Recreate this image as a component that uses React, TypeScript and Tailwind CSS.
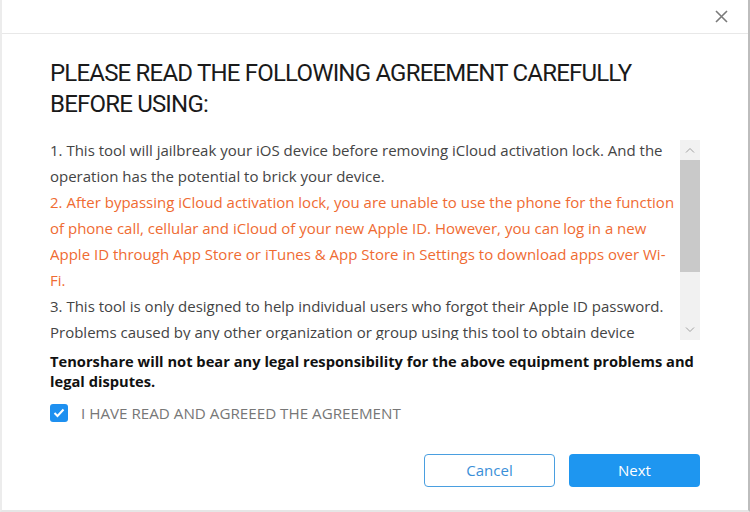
import React from "react";

const body = '"Microsoft YaHei", "Open Sans", "Noto Sans", sans-serif';

function Chevron({ up }: { up?: boolean }) {
  return (
    <svg width="10" height="6" viewBox="0 0 10 6" fill="none" stroke="#a0a0a0" strokeWidth="1">
      {up ? <path d="M1 5.5 L5 1.5 L9 5.5" /> : <path d="M1 0.5 L5 4.5 L9 0.5" />}
    </svg>
  );
}

export default function App() {
  return (
    <div className="w-[750px] h-[512px] bg-white border-l-2 border-r-2 border-b-2 border-l-[#ececec] border-r-[#bdbdbd] border-b-[#e6e6e6] flex flex-col overflow-hidden">
      {/* Header */}
      <div className="h-[34px] shrink-0 border-b border-[#e8e8e8] flex items-center justify-end pr-[20px]">
        <svg width="13" height="13" viewBox="0 0 13 13" stroke="#7a7a7a" strokeWidth="1.6">
          <path d="M1 1 L12 12 M12 1 L1 12" />
        </svg>
      </div>

      <div className="flex-1 flex flex-col pl-[48px] pr-[48px]">
        <h1
          className="mt-[24px] text-[24px] leading-[31px] tracking-[-0.8px] text-[#1a1a1a] font-normal"
          style={{ fontFamily: 'Roboto, "Liberation Sans", sans-serif' }}
        >
          PLEASE READ THE FOLLOWING AGREEMENT CAREFULLY
          <br />
          BEFORE USING:
        </h1>

        {/* Scroll area */}
        <div className="mt-[17px] flex items-start h-[203px]">
          <div
            className="flex-1 h-full overflow-hidden text-[15px] leading-[26px] text-[#444] pr-[2px]"
            style={{ fontFamily: body }}
          >
            <p>
              1. This tool will jailbreak your iOS device before removing iCloud activation lock. And the operation has
              the potential to brick your device.
            </p>
            <p className="text-[#ef6b32]">
              2. After bypassing iCloud activation lock, you are unable to use the phone for the function of phone call,
              cellular and iCloud of your new Apple ID. However, you can log in a new Apple ID through App Store or
              iTunes &amp; App Store in Settings to download apps over Wi-Fi.
            </p>
            <p>
              3. This tool is only designed to help individual users who forgot their Apple ID password. Problems caused
              by any other organization or group using this tool to obtain device information will be at your own risk.
            </p>
          </div>
          <div className="mt-[3px] w-[20px] h-[200px] shrink-0 bg-[#f1f1f1] flex flex-col">
            <div className="h-[20px] flex items-center justify-center">
              <Chevron up />
            </div>
            <div className="h-[112px] bg-[#c9c9c9]" />
            <div className="flex-1" />
            <div className="h-[20px] flex items-center justify-center">
              <Chevron />
            </div>
          </div>
        </div>

        <p
          className="mt-[11px] text-[14.7px] leading-[20px] font-bold text-[#111]"
          style={{ fontFamily: body }}
        >
          Tenorshare will not bear any legal responsibility for the above equipment problems and legal disputes.
        </p>

        <label className="mt-[11px] flex items-center gap-[13px] leading-[22px]">
          <span className="w-[18px] h-[18px] rounded-[3px] bg-[#1e90f0] flex items-center justify-center">
            <svg width="12" height="10" viewBox="0 0 12 10" fill="none" stroke="white" strokeWidth="2">
              <path d="M1.5 5 L4.5 8 L10.5 1.5" />
            </svg>
          </span>
          <span className="text-[15.2px] text-[#777]" style={{ fontFamily: body }}>
            I HAVE READ AND AGREEED THE AGREEMENT
          </span>
        </label>

        <div className="mt-[30px] flex justify-end gap-[14px]">
          <button
            className="w-[131px] h-[33px] rounded-[4px] border border-[#4a9fe0] text-[#3a8fd8] text-[15px] bg-white"
            style={{ fontFamily: body }}
          >
            Cancel
          </button>
          <button
            className="w-[131px] h-[33px] rounded-[4px] bg-[#1e96f0] text-white text-[15px]"
            style={{ fontFamily: body }}
          >
            Next
          </button>
        </div>
      </div>
    </div>
  );
}
